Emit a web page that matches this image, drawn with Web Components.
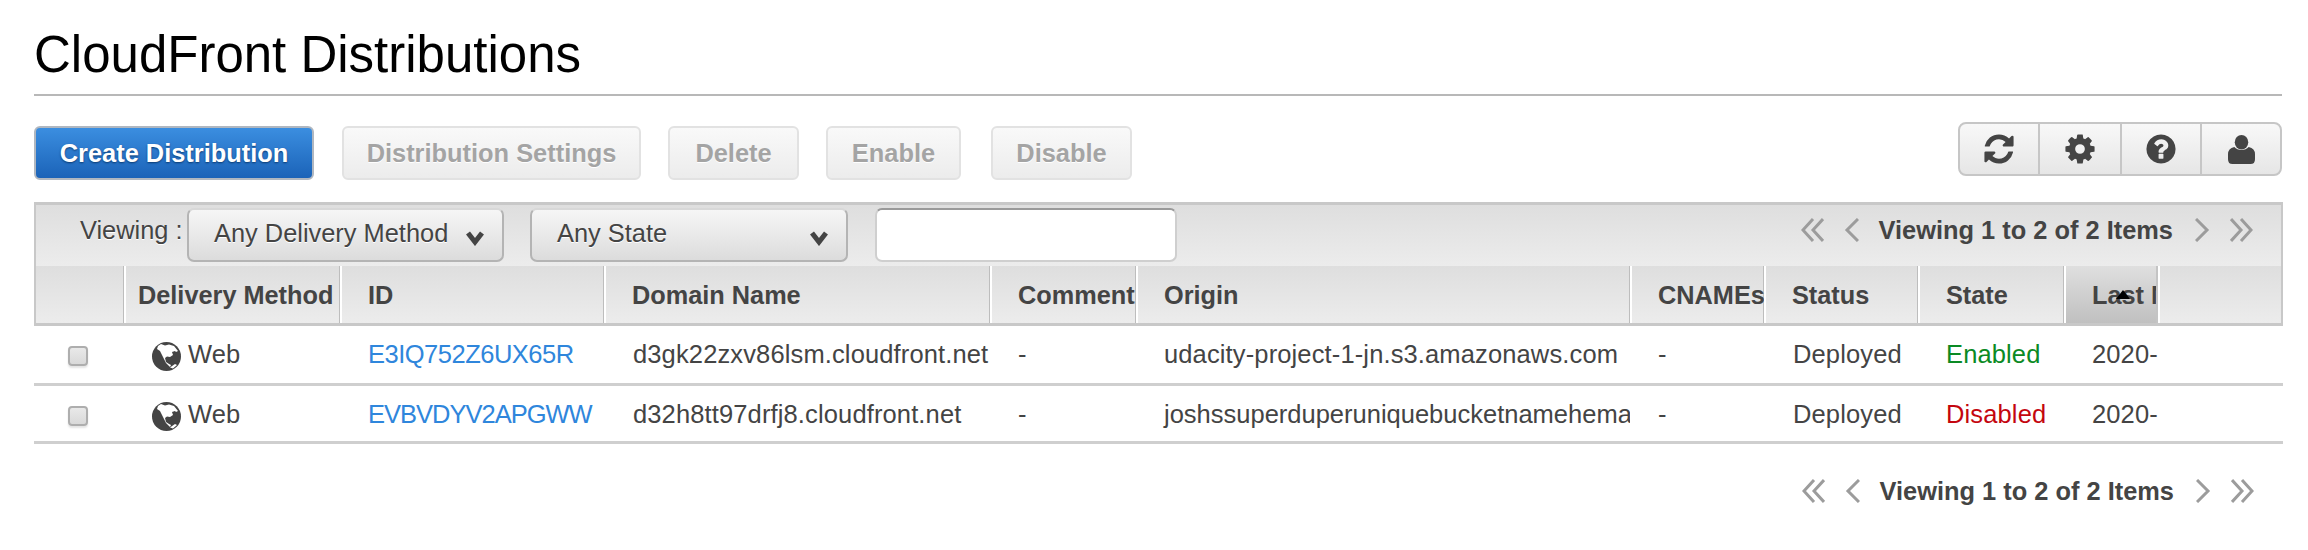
<!DOCTYPE html>
<html><head><meta charset="utf-8"><title>CloudFront Distributions</title>
<style>
html,body{margin:0;padding:0;background:#fff}
body{font-family:"Liberation Sans",Arial,sans-serif;color:#444;width:2308px;height:550px;overflow:hidden}
aws-page{--cols:90px 216px 264px 386px 146px 494px 134px 154px 146px 94px 1fr;--cols-head:88px 216px 264px 386px 146px 494px 134px 154px 146px 94px 1fr}
</style></head><body>
<template id="t-page"><style>
:host{display:block;padding:0 25px 0 34px}
</style><slot></slot></template>
<template id="t-heading"><style>
:host{display:block;height:96px;border-bottom:2px solid #b8b8b8;box-sizing:border-box;margin-right:1px}
h1{margin:0;padding-top:27px;font:400 51px/56px "Liberation Sans",Arial,sans-serif;color:#000}
</style><h1><slot></slot></h1></template>
<template id="t-actions"><style>
:host{display:flex;align-items:flex-start;padding-top:26px;height:80px;box-sizing:content-box}
.l{display:flex;gap:27px;margin-top:4px}
.r{margin-left:auto;margin-right:1px}
</style><div class="l"><slot></slot></div><div class="r"><slot name="end"></slot></div></template>
<template id="t-btn"><style>
:host{display:flex;align-items:center;justify-content:center;box-sizing:border-box;height:54px;border:2px solid #e2e2e2;border-radius:6px;
background:linear-gradient(#f9f9f9,#ececec);color:#a4a4a4;font:700 25.4px "Liberation Sans",Arial,sans-serif;text-shadow:0 1px 0 #fff;white-space:nowrap}
:host([primary]){border-color:#b0b7c0;background:linear-gradient(#3b8ee0,#1b63b8);color:#fff;text-shadow:0 1px 2px #0b3a70}
</style><slot></slot></template>
<template id="t-iconbar"><style>
:host{display:flex;box-sizing:border-box;height:54px;border:2px solid #c6c6c6;border-radius:8px;background:linear-gradient(#f8f8f8,#e6e6e6);overflow:hidden}
::slotted(*){display:flex;align-items:center;justify-content:center;box-sizing:border-box;height:100%;border-right:2px solid #c6c6c6}
::slotted(:last-child){border-right:0}
</style><slot></slot></template>
<template id="t-select"><style>
:host{display:flex;align-items:center;box-sizing:border-box;height:54px;border:2px solid #b4b4b4;border-top-color:#d8d8d8;border-radius:7px;
background:linear-gradient(#f6f6f6,#dcdcdc);font:400 25.4px "Liberation Sans",Arial,sans-serif;color:#444;padding:0 17px 0 25px;text-shadow:0 1px 0 #fff;white-space:nowrap}
.t{flex:1;margin-top:-3px}
svg{width:20px;height:16px;margin-top:5px}
</style><span class="t"><slot></slot></span><svg viewBox="0 0 20 16"><path d="M3 3 10 12 17 3" fill="none" stroke="#444" stroke-width="5"/></svg></template>
<template id="t-pager"><style>
:host{display:flex;align-items:center;gap:20px;font:700 25.4px/28px "Liberation Sans",Arial,sans-serif;color:#444;white-space:nowrap}
svg{height:24px;display:block}
.s{width:15px}.d{width:23px}
span{margin-right:2px}
</style>
<svg class="d" viewBox="0 0 23 24"><path d="M12 1 2 12 12 23M22 1 12 12 22 23" fill="none" stroke="#9c9c9c" stroke-width="3"/></svg>
<svg class="s" viewBox="0 0 15 24"><path d="M14 1 3 12 14 23" fill="none" stroke="#9c9c9c" stroke-width="3"/></svg>
<span><slot></slot></span>
<svg class="s" viewBox="0 0 15 24"><path d="M1 1 12 12 1 23" fill="none" stroke="#9c9c9c" stroke-width="3"/></svg>
<svg class="d" viewBox="0 0 23 24"><path d="M1 1 11 12 1 23M11 1 21 12 11 23" fill="none" stroke="#9c9c9c" stroke-width="3"/></svg></template>
<template id="t-table"><style>
:host{display:block;box-sizing:border-box}
.box{border:2px solid #c8c8c8;border-top-width:3px;border-bottom-width:3px}
.bar{display:flex;align-items:center;height:61px;box-sizing:border-box;padding:0 28px 1px 44px;background:linear-gradient(#dedede,#ececec);font:400 25.4px "Liberation Sans",Arial,sans-serif}
</style><div class="box"><div class="bar"><slot name="bar"></slot></div><slot name="head"></slot></div><slot></slot></template>
<template id="t-filters"><style>
:host{display:flex;align-items:center;width:100%}
.v{width:107px;text-shadow:0 1px 0 #fff;white-space:nowrap;margin-top:-9px}
.f{display:flex;gap:27px}
.p{margin-left:auto;margin-top:-11px}
input{box-sizing:border-box;width:302px;height:54px;border:2px solid #cfcfcf;border-top:2px solid #9a9a9a;border-radius:7px;background:#fff;margin:0;padding:0}
</style><div class="v">Viewing :</div><div class="f"><slot name="sel"></slot><input type="text" aria-label="Search"></div><div class="p"><slot name="pager"></slot></div></template>
<template id="t-row"><style>
:host{display:grid;grid-template-columns:var(--cols);box-sizing:border-box;height:60px;border-bottom:3px solid #cfcfcf;align-items:stretch;font:400 25.5px "Liberation Sans",Arial,sans-serif;letter-spacing:.13px;color:#444}
:host([head]){grid-template-columns:var(--cols-head);height:57px;border-bottom:0;background:linear-gradient(#dedede,#ececec);font-weight:700;font-size:25.3px;letter-spacing:0}
</style><slot></slot></template>
<template id="t-cell"><style>
:host{display:flex;align-items:center;box-sizing:border-box;padding-left:28px;overflow:hidden;white-space:nowrap;min-width:0}
:host([wide]){padding-left:29px}
:host([head]){border-left:2px solid #fff;box-shadow:inset -1px 0 0 #bdbdbd;padding-left:26px;padding-top:2px}
:host([first]){border-left:0}
:host([tight]){padding-left:12px}
:host([sorted]){background:linear-gradient(#dfdfdf,#c0c0c0);position:relative;box-shadow:none;border-right:2px solid #c4c4c4}
:host([end]){box-shadow:none}
:host([chk]){padding-left:34px}
.a{display:none}
:host([sorted]) .a{display:block;position:absolute;left:50px;top:24px;width:0;height:0;border:7px solid transparent;border-top:0;border-bottom:9px solid #000}
</style><slot></slot><i class="a"></i></template>
<template id="t-check"><style>
:host{display:block;box-sizing:border-box;width:20px;height:20px;margin-top:3px;border:2px solid #aeaeae;border-radius:4px;background:linear-gradient(#e9e9e9,#d9d9d9);box-shadow:0 2px 2px #e4e4e4}
</style></template>
<template id="t-globe"><style>
:host{display:block;width:29px;height:29px;margin-right:7px;margin-top:3px}
svg{width:100%;height:100%;display:block}
</style><svg viewBox="0 0 29 29"><circle cx="14.5" cy="14.5" r="14.500" fill="#444"/><path d="M9 2 13 3.500 17 2.500 22 4 26 9 24 10 23 9 20 10 21 13 18 15 15 14.500 13 16 14 20 17 22 19 23 18 25 16 23 14 21 12 17 10 13 8 9 5 7 6 4Z" fill="#fff"/><path d="M18 25.500 23 22 25 23 21 26.500Z" fill="#fff"/></svg></template>
<template id="t-link"><style>:host{color:#2f86dc}</style><slot></slot></template>
<template id="t-status"><style>:host{color:#0b8a24}:host([off]){color:#c4060f}</style><slot></slot></template>
<template id="t-foot"><style>:host{display:flex;justify-content:flex-end;padding:33px 29px 0 0}</style><slot></slot></template>

<aws-page>
  <aws-heading>CloudFront Distributions</aws-heading>
  <aws-actions>
    <aws-btn primary style="width:280px;margin-right:1px">Create Distribution</aws-btn>
    <aws-btn style="width:299px">Distribution Settings</aws-btn>
    <aws-btn style="width:131px">Delete</aws-btn>
    <aws-btn style="width:135px">Enable</aws-btn>
    <aws-btn style="width:141px;margin-left:3px">Disable</aws-btn>
    <aws-iconbar slot="end" style="width:324px">
      <div style="width:80px"><svg width="34" height="34" viewBox="0 0 1792 1792" fill="#444"><path d="M1639 1056q0 5-1 7-64 268-268 434.5t-478 166.5q-146 0-282.5-55t-243.5-157l-129 129q-19 19-45 19t-45-19-19-45v-448q0-26 19-45t45-19h448q26 0 45 19t19 45-19 45l-137 137q71 66 161 102t187 36q134 0 250-65t186-179q11-17 53-117 8-23 30-23h192q13 0 22.5 9.5t9.5 22.5zm25-800v448q0 26-19 45t-45 19h-448q-26 0-45-19t-19-45 19-45l138-138q-148-137-349-137-134 0-250 65t-186 179q-11 17-53 117-8 23-30 23h-199q-13 0-22.5-9.5t-9.5-22.5v-7q65-268 270-434.5t480-166.5q146 0 284 55.5t245 156.5l130-129q19-19 45-19t45 19 19 45z"/></svg></div>
      <div style="width:82px"><svg width="34" height="34" viewBox="0 0 1792 1792" fill="#444"><path d="M1152 896q0-106-75-181t-181-75-181 75-75 181 75 181 181 75 181-75 75-181zm512-109v222q0 12-8 23t-20 13l-185 28q-19 54-39 91 35 50 107 138 10 12 10 25t-9 23q-27 37-99 108t-94 71q-12 0-26-9l-138-108q-44 23-91 38-16 136-29 186-7 28-36 28h-222q-14 0-24.5-8.5t-11.5-21.5l-28-184q-49-16-90-37l-141 107q-10 9-25 9-14 0-25-11-126-114-165-168-7-10-7-23 0-12 8-23 15-21 51-66.5t54-70.5q-27-50-41-99l-183-27q-13-2-21-12.5t-8-23.5v-222q0-12 8-23t19-13l186-28q14-46 39-92-40-57-107-138-10-12-10-24 0-10 9-23 26-36 98.5-107.5t94.5-71.5q13 0 26 10l138 107q44-23 91-38 16-136 29-186 7-28 36-28h222q14 0 24.5 8.5t11.5 21.5l28 184q49 16 90 37l142-107q9-9 24-9 13 0 25 10 129 119 165 170 7 8 7 22 0 12-8 23-15 21-51 66.5t-54 70.5q26 50 41 98l183 28q13 2 21 12.5t8 23.5z"/></svg></div>
      <div style="width:80px"><svg width="34" height="34" viewBox="0 0 1792 1792" fill="#444"><path d="M1024 1376v-192q0-14-9-23t-23-9h-192q-14 0-23 9t-9 23v192q0 14 9 23t23 9h192q14 0 23-9t9-23zm256-672q0-88-55.5-163t-138.5-116-170-41q-243 0-371 213-15 24 8 42l132 100q7 6 19 6 16 0 25-12 53-68 86-92 34-24 86-24 48 0 85.5 26t37.5 59q0 38-20 61t-68 45q-63 28-115.5 86.5t-52.5 125.5v36q0 14 9 23t23 9h192q14 0 23-9t9-23q0-19 21.5-49.5t54.5-49.5q32-18 49-28.5t46-35 44.5-48 28-60.5 12.5-81zm384 192q0 209-103 385.5t-279.5 279.5-385.5 103-385.5-103-279.5-279.5-103-385.5 103-385.5 279.500-279.500 385.500-103 385.500 103 279.500 279.500 103 385.500z"/></svg></div>
      <div style="flex:1"><svg width="27" height="29" viewBox="0 0 30 30" preserveAspectRatio="none" fill="#444"><circle cx="15" cy="7.5" r="7.5"/><path d="M0 20q0-6 7-7.5 3 3 8 3t8-3q7 1.500 7 7.500v5q0 5-5 5H5q-5 0-5-5Z"/></svg></div>
    </aws-iconbar>
  </aws-actions>
  <dist-table>
    <dist-filters slot="bar">
      <aws-select slot="sel" style="width:317px">Any Delivery Method</aws-select>
      <aws-select slot="sel" style="width:318px;margin-left:-1px">Any State</aws-select>
      <aws-pager slot="pager">Viewing 1 to 2 of 2 Items</aws-pager>
    </dist-filters>
    <dist-row slot="head" head>
      <dist-cell head first></dist-cell><dist-cell head tight>Delivery Method</dist-cell><dist-cell head>ID</dist-cell><dist-cell head>Domain Name</dist-cell><dist-cell head>Comment</dist-cell><dist-cell head>Origin</dist-cell><dist-cell head>CNAMEs</dist-cell><dist-cell head>Status</dist-cell><dist-cell head>State</dist-cell><dist-cell head sorted>Last Modified</dist-cell><dist-cell head end></dist-cell>
    </dist-row>
    <dist-row>
      <dist-cell chk><dist-check></dist-check></dist-cell><dist-cell><dist-globe></dist-globe>Web</dist-cell><dist-cell><dist-link style="letter-spacing:-.5px">E3IQ752Z6UX65R</dist-link></dist-cell><dist-cell wide>d3gk22zxv86lsm.cloudfront.net</dist-cell><dist-cell>-</dist-cell><dist-cell>udacity-project-1-jn.s3.amazonaws.com</dist-cell><dist-cell>-</dist-cell><dist-cell wide>Deployed</dist-cell><dist-cell><dist-status>Enabled</dist-status></dist-cell><dist-cell>2020-</dist-cell><dist-cell></dist-cell>
    </dist-row>
    <dist-row style="height:58px;padding-top:2px">
      <dist-cell chk><dist-check></dist-check></dist-cell><dist-cell><dist-globe></dist-globe>Web</dist-cell><dist-cell><dist-link style="letter-spacing:-1px">EVBVDYV2APGWW</dist-link></dist-cell><dist-cell wide>d32h8tt97drfj8.cloudfront.net</dist-cell><dist-cell>-</dist-cell><dist-cell style="letter-spacing:0">joshssuperduperuniquebucketnamehema</dist-cell><dist-cell>-</dist-cell><dist-cell wide>Deployed</dist-cell><dist-cell><dist-status off>Disabled</dist-status></dist-cell><dist-cell>2020-</dist-cell><dist-cell></dist-cell>
    </dist-row>
  </dist-table>
  <dist-foot><aws-pager>Viewing 1 to 2 of 2 Items</aws-pager></dist-foot>
</aws-page>
<script>
const map={'aws-page':'t-page','aws-heading':'t-heading','aws-actions':'t-actions','aws-btn':'t-btn','aws-iconbar':'t-iconbar','aws-select':'t-select','aws-pager':'t-pager','dist-table':'t-table','dist-filters':'t-filters','dist-row':'t-row','dist-cell':'t-cell','dist-check':'t-check','dist-globe':'t-globe','dist-link':'t-link','dist-status':'t-status','dist-foot':'t-foot'};
for(const [name,id] of Object.entries(map)){
  customElements.define(name,class extends HTMLElement{
    constructor(){super();this.attachShadow({mode:'open'}).appendChild(document.getElementById(id).content.cloneNode(true));}
  });
}
</script>
</body></html>
